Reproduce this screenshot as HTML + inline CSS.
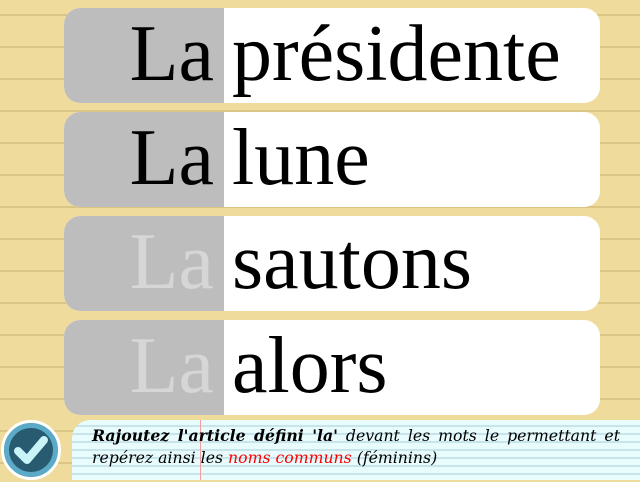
<!DOCTYPE html>
<html><head><meta charset="utf-8"><style>
html,body{margin:0;padding:0}
body{width:640px;height:480px;position:relative;overflow:hidden;
background:#efdc9c repeating-linear-gradient(to bottom,transparent 0,transparent 14px,#d9c584 14px,#d9c584 16px,transparent 16px,transparent 32px);}
.row{position:absolute;left:64px;width:536px;height:95px;border-radius:16px;background:#fff;overflow:hidden}
.g{position:absolute;left:0;top:0;width:160px;height:95px;background:#bdbdbd;border-radius:16px 0 0 16px}
.la{position:absolute;right:386px;font:80px "Liberation Serif",serif;top:6px;line-height:80px;color:#000}
.la.f{color:#d6d6d6}
.w{position:absolute;left:168px;top:6px;font:80px "Liberation Serif",serif;line-height:80px;color:#000}
.panel{position:absolute;left:72px;top:420px;width:568px;height:60px;border-top-left-radius:18px;
background:#e8fbfd repeating-linear-gradient(to bottom,transparent 0,transparent 5px,#c7e4ea 5px,#c7e4ea 7px,transparent 7px,transparent 8px);}
.red{position:absolute;left:128px;top:0;width:1px;height:60px;background:#f0a0a0}
.txt{position:absolute;left:20px;top:5px;width:528px;font:italic 15.7px/22px "DejaVu Serif",serif;color:#000}
.l1{text-align:justify;text-align-last:justify}
.circ{position:absolute;left:1px;top:420px;width:54px;height:54px;border-radius:50%;background:#285a70;border:3px solid #fff;box-shadow:inset 0 0 0 5px #5aaac8}
</style></head><body>
<div class="row" style="top:8px"><div class="g"></div><div class="la">La</div><div class="w">présidente</div></div>
<div class="row" style="top:112px"><div class="g"></div><div class="la">La</div><div class="w">lune</div></div>
<div class="row" style="top:216px"><div class="g"></div><div class="la f">La</div><div class="w">sautons</div></div>
<div class="row" style="top:320px"><div class="g"></div><div class="la f">La</div><div class="w">alors</div></div>
<div class="panel"><div class="red"></div><div class="txt"><div class="l1"><b>Rajoutez l'article défini 'la'</b> devant les mots le permettant et</div><div>repérez ainsi les <span style="color:#f00">noms communs</span> (féminins)</div></div></div>
<div class="circ"><svg width="54" height="54" viewBox="0 0 54 54"><path d="M14 28 L23 37 L40 17" fill="none" stroke="#c8f4f8" stroke-width="8" stroke-linecap="round" stroke-linejoin="round"/></svg></div>
</body></html>
